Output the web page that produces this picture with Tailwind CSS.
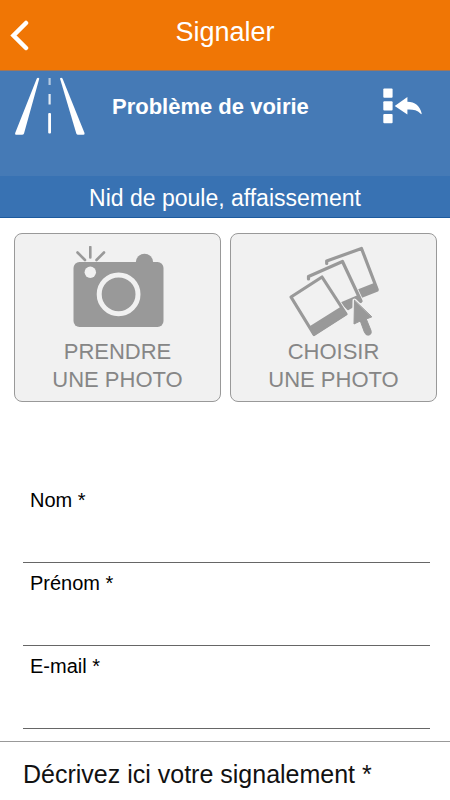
<!DOCTYPE html>
<html lang="fr">
<head>
    <meta charset="UTF-8">
    <meta name="viewport" content="width=device-width, initial-scale=1.0">
    <title>Signaler</title>
    <script src="https://cdn.jsdelivr.net/npm/@tailwindcss/browser@4"></script>
</head>
<body class="bg-white text-black font-['Liberation_Sans',Arial,sans-serif] min-h-screen flex flex-col">

<!-- Title bar -->
<header class="grid grid-cols-[40px_1fr_40px] h-[71px] bg-[#f07605] border-b border-[#a0765a]">
    <button type="button" aria-label="Retour" class="flex items-center justify-center">
        <svg class="w-6 h-8" viewBox="0 0 24 32" fill="none" stroke="#fff" stroke-width="4.500" stroke-linecap="round">
            <path d="M18 4L5.500 16.500L18 29"/>
        </svg>
    </button>
    <h1 class="pt-4 text-center text-[27px] leading-8 text-white">Signaler</h1>
</header>

<!-- Category -->
<section class="grid grid-cols-[72px_1fr_42px] h-[105px] pl-[14px] pr-[27px] pt-[6px] bg-[#457ab6] text-white">
    <svg class="w-[72px] h-[60px]" viewBox="14 77 72 60" fill="#fff">
        <path d="M36.800 78.500Q38 77 39.300 78.500L24 133.500Q23.500 134.700 22 134.700H16Q14.500 134.500 15.200 133Z"/>
        <path d="M60 78.500Q61 77 62.500 78.500L84.500 133Q85 134.500 83.500 134.700H78Q76.800 134.700 76.300 133.500Z"/>
        <rect x="48.500" y="78" width="2.200" height="7" opacity=".6"/>
        <rect x="48.500" y="94" width="2.200" height="10.500" opacity=".85"/>
        <rect x="48.200" y="113" width="2.800" height="20.500" rx="1"/>
    </svg>
    <h2 class="pt-4 pl-[26px] text-[22px] leading-7 font-bold">Problème de voirie</h2>
    <button type="button" aria-label="Changer de catégorie" class="h-[58px]">
        <svg class="w-[42px] h-[40px]" viewBox="381 86 42 40" fill="#fff">
            <rect x="383.300" y="88.500" width="9.300" height="9.300" rx="1"/>
            <rect x="383.300" y="101.300" width="9.300" height="9.300" rx="1"/>
            <rect x="383.300" y="114" width="9.300" height="9.300" rx="1"/>
            <path d="M394.700 105.900L407.400 97V101.800C415 101.800 420 106 421.700 113.500Q421.300 114.800 420.500 113.500C417 110 413 109.300 407.400 109.500V114.600Z"/>
        </svg>
    </button>
</section>
<p class="h-[42px] bg-[#3872b3] border-b border-[#1c5a9e] pt-1 text-center text-[23px] leading-9 text-white">Nid de poule, affaissement</p>

<!-- Photo buttons -->
<div class="grid grid-cols-2 gap-[9px] pl-[14px] pr-[13px] pt-[15px]">
    <button type="button" class="flex flex-col items-center pt-3 pb-[7px] bg-[#f1f1f1] border border-[#999] rounded-lg text-[22px] leading-7 text-[#868686]">
        <svg class="w-[110px] h-[92px]" viewBox="63 246 110 92" fill="#999">
            <path d="M90.300 247V257.500M77.500 252.500L85 260M104 252.500L96.500 260" stroke="#999" stroke-width="2.600" stroke-linecap="round"/>
            <circle cx="144.500" cy="262.500" r="8.700"/>
            <rect x="73.500" y="262" width="90" height="65" rx="6"/>
            <circle cx="90.300" cy="272.300" r="5.700" fill="#f1f1f1"/>
            <circle cx="118.600" cy="294.300" r="19.400" fill="none" stroke="#f1f1f1" stroke-width="5"/>
        </svg>
        PRENDRE<br>UNE PHOTO
    </button>
    <button type="button" class="flex flex-col items-center pt-3 pb-[7px] bg-[#f1f1f1] border border-[#999] rounded-lg text-[22px] leading-7 text-[#868686]">
        <svg class="w-[110px] h-[92px]" viewBox="279 246 110 92" stroke-linejoin="round" stroke-linecap="round">
            <!-- back photo -->
            <path d="M326.700 264L326.500 261L361.500 248.500L377 290L364 295.500Z" fill="#f1f1f1"/>
            <path d="M326.700 263.500V261L361.500 248.500L377 289" fill="none" stroke="#999" stroke-width="3.200"/>
            <path d="M358 290.500L374.500 284L377.500 290.300L361 297Z" fill="#999" stroke="#999" stroke-width="2.400"/>
            <!-- middle photo -->
            <path d="M308.500 279V276.500L342.500 261.500L361 301L350 308Z" fill="#f1f1f1" stroke="#f1f1f1" stroke-width="5"/>
            <path d="M308.500 279V276.500L342.500 261.500L361 301" fill="none" stroke="#999" stroke-width="3.200"/>
            <path d="M342 303L358.500 296L361 301.500L348 309Z" fill="#999" stroke="#999" stroke-width="2.400"/>
            <!-- front photo -->
            <path d="M291 297L322 277L346 314L314 334.500Z" fill="#f1f1f1" stroke="#f1f1f1" stroke-width="5"/>
            <path d="M291 297L322 277L346 314L314 334.500Z" fill="none" stroke="#999" stroke-width="3.200"/>
            <path d="M310.700 327L341 308L346 314L314 334.500Z" fill="#999" stroke="#999" stroke-width="2.400"/>
            <!-- pointer -->
            <path d="M354.500 300.500L354 324L360.300 321L364.500 332.500Q366 336 369.500 335Q372 333.500 371 330.500L366.300 319L371.500 317Z" fill="#f1f1f1" stroke="#f1f1f1" stroke-width="4"/>
            <path d="M354.500 300.500L354 324L360.300 321L364.500 332.500Q366 336 369.500 335Q372 333.500 371 330.500L366.300 319L371.500 317Z" fill="#999" stroke="#999"/>
        </svg>
        CHOISIR<br>UNE PHOTO
    </button>
</div>

<!-- Form -->
<form class="flex flex-col grow pt-[78px]">
    <div class="pl-[23px] pr-5">
        <div class="pt-2">
            <label for="nom" class="block pl-[7px] text-[20px] leading-6">Nom *</label>
            <input type="text" id="nom" class="block w-full h-[51px] px-[7px] text-[20px] border-b border-[#666] outline-none">
        </div>
        <div class="pt-2">
            <label for="prenom" class="block pl-[7px] text-[20px] leading-6">Prénom *</label>
            <input type="text" id="prenom" class="block w-full h-[51px] px-[7px] text-[20px] border-b border-[#666] outline-none">
        </div>
        <div class="pt-2">
            <label for="email" class="block pl-[7px] text-[20px] leading-6">E-mail *</label>
            <input type="email" id="email" class="block w-full h-[51px] px-[7px] text-[20px] border-b border-[#666] outline-none">
        </div>
    </div>
    <textarea rows="1" aria-label="Décrivez ici votre signalement" placeholder="Décrivez ici votre signalement *" class="grow mt-3 w-full px-[23px] pt-4 text-[25px] leading-8 border-t border-[#999] placeholder:text-[#111] outline-none resize-none"></textarea>
</form>

</body>
</html>
